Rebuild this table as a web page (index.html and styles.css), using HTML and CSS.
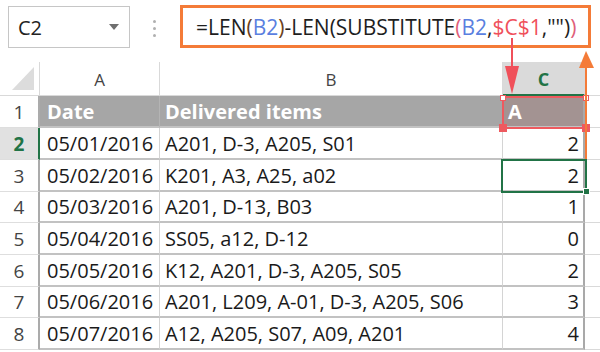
FILE: index.html
```html
<!DOCTYPE html>
<html>
<head>
<meta charset="utf-8">
<link rel="stylesheet" href="styles.css">
</head>
<body>
<div class="page">
  <div class="bar">
    <div class="namebox"><span class="ref">C2</span><span class="caret"></span></div>
    <div class="dots"><i></i><i></i><i></i></div>
    <div class="fx"><span class="k">=LEN</span><span class="p1">(</span><span class="bl">B2</span><span class="p1">)</span><span class="k">-LEN(SUBSTITUTE</span><span class="p2">(</span><span class="bl">B2</span><span class="k">,</span><span class="rd">$C$1</span><span class="k">,"")</span><span class="p2">)</span></div>
  </div>
  <div class="sheet">
    <div class="corner"><svg width="22" height="23" viewBox="0 0 22 23"><polygon points="22,0 22,23 0,23" fill="#dcdcdc"/></svg></div>
    <div class="ch">A</div>
    <div class="ch">B</div>
    <div class="ch ch-sel">C</div>
    <div class="ch ch-d"></div>

    <div class="rn">1</div>
    <div class="cell hd">Date</div>
    <div class="cell b hd">Delivered items</div>
    <div class="cell c c1">A</div>
    <div class="cell d"></div>

    <div class="rn rn-sel">2</div>
    <div class="cell">05/01/2016</div>
    <div class="cell b">A201, D-3, A205, S01</div>
    <div class="cell c">2</div>
    <div class="cell d"></div>

    <div class="rn">3</div>
    <div class="cell">05/02/2016</div>
    <div class="cell b">K201, A3, A25, a02</div>
    <div class="cell c">2</div>
    <div class="cell d"></div>

    <div class="rn">4</div>
    <div class="cell">05/03/2016</div>
    <div class="cell b">A201, D-13, B03</div>
    <div class="cell c">1</div>
    <div class="cell d"></div>

    <div class="rn">5</div>
    <div class="cell">05/04/2016</div>
    <div class="cell b">SS05, a12, D-12</div>
    <div class="cell c">0</div>
    <div class="cell d"></div>

    <div class="rn">6</div>
    <div class="cell">05/05/2016</div>
    <div class="cell b">K12, A201, D-3, A205, S05</div>
    <div class="cell c">2</div>
    <div class="cell d"></div>

    <div class="rn">7</div>
    <div class="cell">05/06/2016</div>
    <div class="cell b">A201, L209, A-01, D-3, A205, S06</div>
    <div class="cell c">3</div>
    <div class="cell d"></div>

    <div class="rn">8</div>
    <div class="cell">05/07/2016</div>
    <div class="cell b">A12, A205, S07, A09, A201</div>
    <div class="cell c">4</div>
    <div class="cell d"></div>
  </div>
  <svg class="overlay" width="600" height="352" viewBox="0 0 600 352">
    <rect x="503" y="97" width="83" height="31" fill="none" stroke="#ee5a5f" stroke-width="2"/>
    <rect x="500.5" y="95.5" width="5" height="5" fill="#fff" stroke="#ee5a5f" stroke-width="1"/>
    <rect x="583.5" y="95.5" width="5" height="5" fill="#fff" stroke="#ee5a5f" stroke-width="1"/>
    <rect x="499" y="124" width="8" height="8" fill="#ee5a5f"/>
    <rect x="582" y="124" width="8" height="8" fill="#ee5a5f"/>
    <rect x="511" y="38" width="2" height="32" fill="#f0505a"/>
    <polygon points="505,66 519,66 512,94" fill="#f0505a"/>
    <rect x="502" y="160" width="84" height="32" fill="none" stroke="#217346" stroke-width="2"/>
    <rect x="583.5" y="188.5" width="6" height="6" fill="#217346" stroke="#fff" stroke-width="1"/>
    <rect x="585" y="62" width="2" height="97" fill="#f47b38"/>
    <polygon points="579,68 594,68 586,51" fill="#f47b38"/>
  </svg>
</div>
</body>
</html>
```
FILE: styles.css
```css
body {
  margin: 0;
  background: #fff;
  font-family: "Open Sans", "Noto Sans", sans-serif;
}
.page {
  position: relative;
  width: 600px;
  height: 352px;
  overflow: hidden;
}
.bar {
  display: flex;
  align-items: flex-start;
  height: 62px;
  padding-top: 5px;
  box-sizing: border-box;
}
.namebox {
  margin: 1px 0 0 8px;
  width: 122px;
  height: 42px;
  box-sizing: border-box;
  border: 1px solid #c6c6c6;
  display: flex;
  align-items: center;
  justify-content: space-between;
  padding: 0 10px 0 9px;
  font-size: 20px;
  color: #222;
}
.caret {
  width: 0;
  height: 0;
  border-left: 5px solid transparent;
  border-right: 5px solid transparent;
  border-top: 6px solid #6f6f6f;
}
.dots {
  margin: 15px 24px 0 23px;
  display: flex;
  flex-direction: column;
  gap: 4px;
}
.dots i {
  display: block;
  width: 3px;
  height: 3px;
  background: #b0b0b0;
  border-radius: 50%;
}
.fx {
  width: 411px;
  height: 43px;
  box-sizing: border-box;
  border: 3px solid #f47b38;
  display: flex;
  align-items: center;
  padding-left: 13px;
  font-size: 21px;
  color: #1e1e1e;
  white-space: nowrap;
}
.fx .p1 { color: #6a3f22; }
.fx .bl { color: #5a7fe0; }
.fx .rd { color: #f0505a; }
.fx .p2 { color: #e0607a; }

.sheet {
  display: grid;
  grid-template-columns: 40px 120px 343px 82px 15px;
  grid-template-rows: 34px 32px 32px 32px 31px 32px 32px 31px 32px;
  font-size: 20px;
}
.sheet > div {
  box-sizing: border-box;
  display: flex;
  align-items: center;
  white-space: nowrap;
  overflow: hidden;
}
.corner {
  justify-content: flex-end;
  align-items: flex-end !important;
  padding: 0 5px 5px 0;
  border-right: 1px solid #d9d9d9;
  border-bottom: 1px solid #d9d9d9;
}
.corner svg { display: block; }
.ch {
  justify-content: center;
  font-size: 17px;
  color: #444;
  padding-top: 2px;
  border-right: 1px solid #d9d9d9;
  border-bottom: 1px solid #d9d9d9;
}
.ch-sel {
  background: #dadada;
  color: #217346;
  font-weight: bold;
  font-size: 18px;
  border-bottom: 2px solid #217346;
}
.ch-d { border-right: none; }
.rn {
  justify-content: center;
  color: #444;
  font-size: 19px;
  border-right: 2px solid #ababab;
  border-bottom: 1px solid #dedede;
}
.rn-sel {
  background: #e1e1e1;
  color: #217346;
  font-weight: bold;
  border-right-color: #217346;
}
.cell {
  padding-left: 7px;
  color: #1a1a1a;
  border-bottom: 2px solid #c2c2c2;
  border-right: 1px solid #d4d4d4;
}
.b { padding-left: 5px; }
.c {
  justify-content: flex-end;
  padding-right: 4px;
  border-right: 2px solid #a9a9a9;
}
.d {
  border-right: none;
  border-bottom: 1px solid #d9d9d9;
}
.hd {
  background: #a6a6a6;
  color: #fff;
  font-weight: bold;
  border-right-color: #b4b4b4;
}
.c1 {
  background: #a39392;
  color: #fff;
  font-weight: bold;
  justify-content: flex-start;
  padding-left: 5px;
}
.overlay {
  position: absolute;
  left: 0;
  top: 0;
  pointer-events: none;
}
```
